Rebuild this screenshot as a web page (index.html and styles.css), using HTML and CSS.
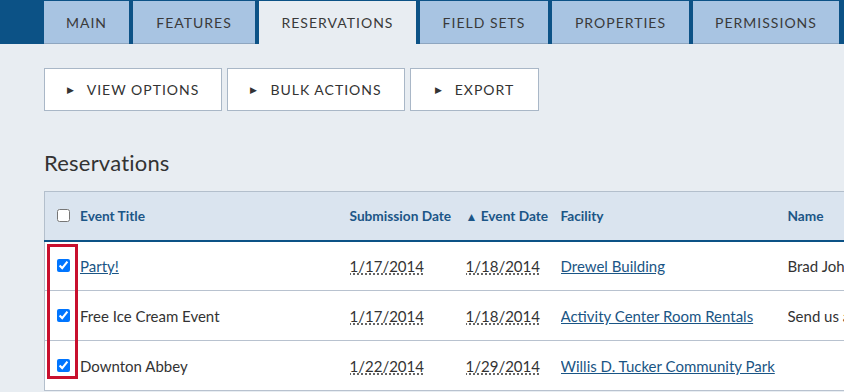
FILE: index.html
```html
<!DOCTYPE html>
<html>
<head>
<meta charset="utf-8">
<link rel="stylesheet" href="styles.css">
</head>
<body>
<nav class="tabs">
  <a class="tab tab-main">MAIN</a>
  <a class="tab tab-features">FEATURES</a>
  <a class="tab tab-res active">RESERVATIONS</a>
  <a class="tab tab-fields">FIELD SETS</a>
  <a class="tab tab-props">PROPERTIES</a>
  <a class="tab tab-perms">PERMISSIONS</a>
</nav>
<main class="content">
  <div class="actions">
    <button class="btn btn-view"><span class="tri">&#9654;</span>VIEW OPTIONS</button>
    <button class="btn btn-bulk"><span class="tri">&#9654;</span>BULK ACTIONS</button>
    <button class="btn btn-export"><span class="tri">&#9654;</span>EXPORT</button>
  </div>
  <h1 class="title">Reservations</h1>
  <div class="table-wrap">
    <table class="grid">
      <colgroup>
        <col class="c-title"><col class="c-sub"><col class="c-evt"><col class="c-fac"><col class="c-name">
      </colgroup>
      <thead>
        <tr>
          <th class="first"><span class="cellflex"><input type="checkbox" class="cb cb-head">Event Title</span></th>
          <th>Submission Date</th>
          <th><span class="sort">&#9650;</span> Event Date</th>
          <th>Facility</th>
          <th>Name</th>
        </tr>
      </thead>
      <tbody>
        <tr>
          <td class="first"><span class="cellflex"><input type="checkbox" class="cb" checked><a href="#" class="link">Party!</a></span></td>
          <td><span class="date">1/17/2014</span></td>
          <td><span class="date">1/18/2014</span></td>
          <td><a href="#" class="link">Drewel Building</a></td>
          <td>Brad Johnson</td>
        </tr>
        <tr>
          <td class="first"><span class="cellflex"><input type="checkbox" class="cb" checked>Free Ice Cream Event</span></td>
          <td><span class="date">1/17/2014</span></td>
          <td><span class="date">1/18/2014</span></td>
          <td><a href="#" class="link">Activity Center Room Rentals</a></td>
          <td>Send us a note</td>
        </tr>
        <tr>
          <td class="first"><span class="cellflex"><input type="checkbox" class="cb" checked>Downton Abbey</span></td>
          <td><span class="date">1/22/2014</span></td>
          <td><span class="date">1/29/2014</span></td>
          <td><a href="#" class="link">Willis D. Tucker Community Park</a></td>
          <td></td>
        </tr>
      </tbody>
    </table>
    <div class="highlight"></div>
  </div>
</main>
</body>
</html>
```
FILE: styles.css
```css
* { box-sizing: border-box; }
html, body { margin: 0; padding: 0; }
body {
  width: 844px;
  height: 392px;
  overflow: hidden;
  background: #e8edf2;
  font-family: "Lato", "Noto Sans", sans-serif;
  color: #333;
}
.tabs {
  display: flex;
  gap: 4px;
  background: #0c5286;
  padding: 1px 0 0 44px;
  height: 44px;
}
.tab {
  display: flex;
  align-items: center;
  justify-content: center;
  background: #a8c4e2;
  border-bottom: 1px solid #8ea6c0;
  color: #3a3a3a;
  font-size: 14px;
  letter-spacing: 1px;
  height: 43px;
  flex: none;
}
.tab.active { background: #e8edf2; border-bottom-color: #e8edf2; }
.tab-main { width: 85px; }
.tab-features { width: 122px; }
.tab-res { width: 157px; }
.tab-fields { width: 128px; }
.tab-props { width: 137px; }
.tab-perms { width: 146px; }

.content { padding: 24px 0 0 44px; }
.actions { display: flex; gap: 5px; }
.btn {
  height: 43px;
  background: #fff;
  border: 1px solid #a9b7c7;
  font-family: inherit;
  font-size: 14px;
  letter-spacing: 1px;
  color: #333;
  display: flex;
  align-items: center;
  justify-content: center;
  padding: 0;
}
.btn-view { width: 178px; }
.btn-bulk { width: 178px; }
.btn-export { width: 129px; }
.tri { font-size: 9px; margin-right: 12px; color: #333; }

.title {
  font-weight: normal;
  font-size: 22px;
  margin: 38px 0 0 0;
  line-height: 28px;
  color: #333;
  letter-spacing: 0.2px;
}
.table-wrap { position: relative; margin-top: 14px; width: 1000px; }
.grid {
  border-collapse: collapse;
  table-layout: fixed;
  width: 1000px;
  background: #fff;
  border-left: 1px solid #b3bfcc;
  border-top: 1px solid #b3bfcc;
}
.c-title { width: 305px; }
.c-sub { width: 116px; }
.c-evt { width: 95px; }
.c-fac { width: 227px; }
.c-name { width: 257px; }
thead th {
  background: #dae4ef;
  color: #1c5687;
  font-weight: bold;
  font-size: 13.7px;
  text-align: left;
  height: 49px;
  padding: 0;
  border-bottom: 2px solid #0c5286;
  white-space: nowrap;
}
tbody td {
  height: 50px;
  padding: 0;
  font-size: 15px;
  border-bottom: 1px solid #b8c2cf;
  white-space: nowrap;
  overflow: hidden;
}
.first { padding-left: 12px !important; }
.cellflex { display: flex; align-items: center; }
.cb {
  width: 13px;
  height: 13px;
  margin: 0 10px 0 0;
  flex: none;
}
.sort { font-size: 12px; }
.link { color: #1a5585; text-decoration: underline; }
.date { text-decoration: underline dotted; text-underline-offset: 2px; }
.highlight {
  position: absolute;
  left: 3px;
  top: 53px;
  width: 31px;
  height: 135px;
  border: 3px solid #c8102e;
  pointer-events: none;
}
```
